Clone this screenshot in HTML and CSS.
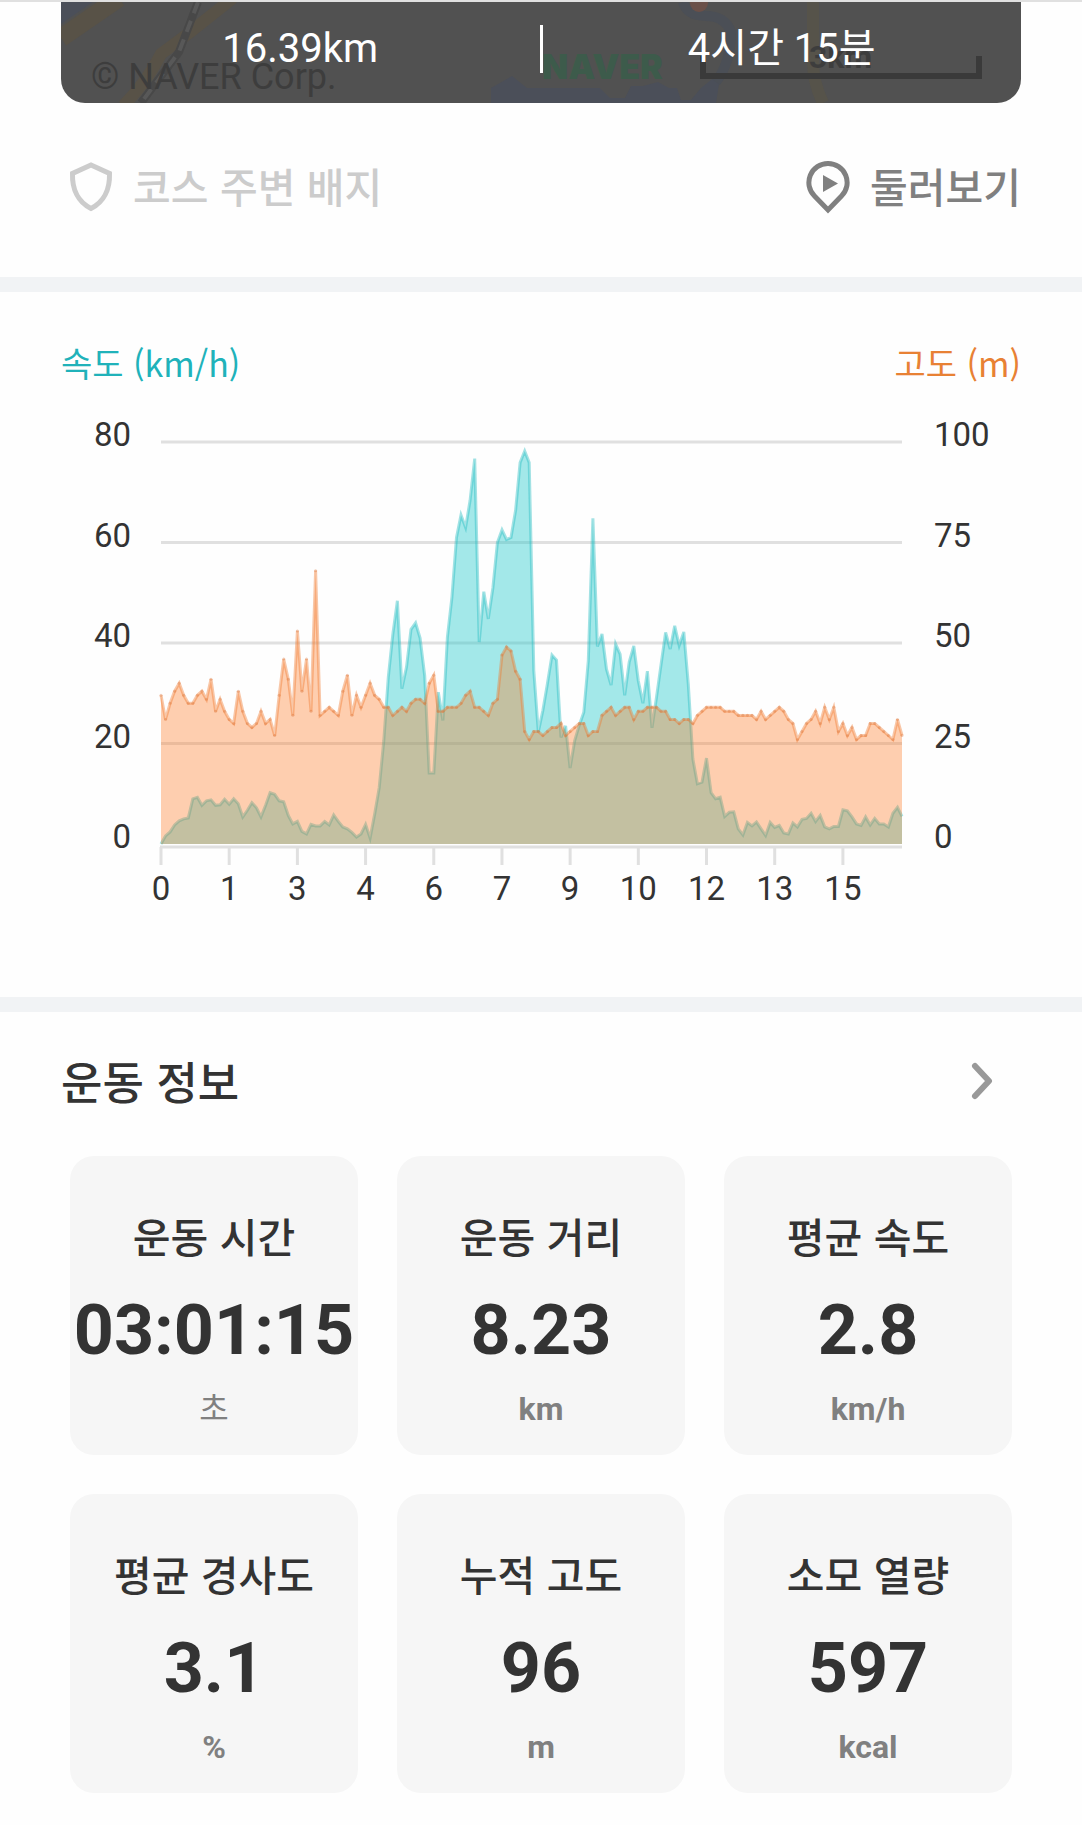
FILE: index.html
```html
<!DOCTYPE html>
<html lang="ko">
<head>
    <meta charset="UTF-8">
    <meta name="viewport" content="width=device-width, initial-scale=1.0">
    <title>운동 정보</title>
    <link rel="stylesheet" href="styles.css">
</head>
<body>
    <header class="course">
        <div class="course-summary">
            <svg class="map" viewBox="0 0 960 101" preserveAspectRatio="xMidYMax slice" aria-hidden="true">
                <g fill="#4b4f59">
                    <path d="M0 0H32L0 22Z"/>
                    <path d="M430 101V86L451 74L466 86H539L549 96H564L570 84H582L597 80L608 86H616L620 98H630L640 86L660 70L655 101Z"/>
                </g>
                <path d="M622 0Q626 14 645 14T670 30Q670 60 655 80" fill="none" stroke="#4b4f56" stroke-width="10"/>
                <circle cx="638" cy="1" r="9" fill="#6b5048"/>
                <g fill="none" stroke="#585247" stroke-width="12">
                    <path d="M0 36L58 -4" stroke-width="18"/>
                    <path d="M172 -4L128 31L100 52Q86 80 62 104"/>
                    <path d="M752 0V60Q752 80 762 101" stroke="#56534a"/>
                </g>
                <path d="M137 0L118 50L80 101" fill="none" stroke="#484848" stroke-width="8"/>
                <path d="M137 0L118 50L80 101" fill="none" stroke="#585858" stroke-width="4" stroke-dasharray="12 8"/>
                <path d="M642 54V74H918V54" fill="none" stroke="#3a3a3a" stroke-width="6"/>
                <text class="map-scale" x="748" y="66">3km</text>
                <text class="map-copyright" x="30" y="87">© NAVER Corp.</text>
                <text class="map-logo" x="481" y="77">NAVER</text>
            </svg>
            <div class="summary-item">16.39km</div>
            <div class="summary-item">4시간 15분</div>
        </div>
        <div class="course-actions">
            <button class="action" disabled>
                <svg width="44" height="52" viewBox="0 0 44 52" aria-hidden="true">
                    <path d="M22 4L40.500 12.500C41 28 35 41 22 47.500C9 41 3 28 3.500 12.500Z" fill="none" stroke="currentColor" stroke-width="5"/>
                </svg>
                코스 주변 배지
            </button>
            <button class="action">
                <svg width="44" height="54" viewBox="0 0 44 54" aria-hidden="true">
                    <path d="M22 3.500A19 19 0 0 0 8.500 36L22 50L35.500 36A19 19 0 0 0 22 3.500Z" fill="none" stroke="currentColor" stroke-width="5"/>
                    <path d="M17 15L32 23.500L17 32Z" fill="currentColor"/>
                </svg>
                둘러보기
            </button>
        </div>
    </header>

    <section class="chart">
        <div class="chart-legend">
            <span class="legend-speed">속도 (km/h)</span>
            <span class="legend-altitude">고도 (m)</span>
        </div>
        <svg class="chart-plot" id="chartPlot" viewBox="0 0 960 528"></svg>
    </section>

    <section class="workout">
        <div class="workout-header">
            <h2>운동 정보</h2>
            <button class="more" aria-label="더보기">
                <svg width="24" height="40" viewBox="0 0 24 40" aria-hidden="true">
                    <path d="M5 5L19 20L5 35" fill="none" stroke="currentColor" stroke-width="6" stroke-linecap="round" stroke-linejoin="round"/>
                </svg>
            </button>
        </div>
        <div class="cards">
            <div class="card">
                <div class="card-label">운동 시간</div>
                <div class="card-value">03:01:15</div>
                <div class="card-unit card-unit-ko">초</div>
            </div>
            <div class="card">
                <div class="card-label">운동 거리</div>
                <div class="card-value">8.23</div>
                <div class="card-unit">km</div>
            </div>
            <div class="card">
                <div class="card-label">평균 속도</div>
                <div class="card-value">2.8</div>
                <div class="card-unit">km/h</div>
            </div>
            <div class="card">
                <div class="card-label">평균 경사도</div>
                <div class="card-value">3.1</div>
                <div class="card-unit">%</div>
            </div>
            <div class="card">
                <div class="card-label">누적 고도</div>
                <div class="card-value">96</div>
                <div class="card-unit">m</div>
            </div>
            <div class="card">
                <div class="card-label">소모 열량</div>
                <div class="card-value">597</div>
                <div class="card-unit">kcal</div>
            </div>
        </div>
    </section>

    <script src="chart.js"></script>
</body>
</html>
```
FILE: chart.js
```js
// km/h
const speed = [
    0, 1.6, 2.4, 3.8, 4.6, 5, 5.2, 9, 9.3, 7.7, 8.6, 8.8, 7.7, 7.8, 8.9,
    7.9, 9, 8, 5.4, 6.7, 8.2, 7.2, 5.4, 7.7, 10.2, 9.9, 8.6, 8.4, 5.7, 4,
    4.5, 2.5, 2, 3.9, 3.6, 3.6, 4.5, 3.8, 5.8, 4.5, 3.4, 3, 2.3, 1.4, 2,
    3.9, 1.2, 6, 11.2, 20.6, 33.2, 41.7, 48.4, 30.9, 35.2, 42.7, 44, 41, 33.5, 14.1,
    14.1, 30.2, 24.6, 41.2, 49.1, 61, 65.5, 63, 68.4, 76.7, 40.2, 50.2, 44.8, 51, 60,
    62.5, 60.6, 61, 66.4, 75.9, 78.2, 75.9, 34.5, 22.3, 26.6, 31.9, 37.6, 36.6, 21.2, 23.5,
    15.1, 20.6, 23.6, 26.2, 36.5, 64.8, 39.3, 41.8, 34.8, 31.6, 39.8, 37.8, 29.6, 36.2, 39.4,
    32.5, 28, 34.4, 23.1, 29.2, 35.8, 42.1, 38.8, 43.4, 39.5, 42.2, 31.8, 16.9, 12, 12.3,
    17.1, 10.2, 9, 9.3, 5.5, 6.3, 6.4, 3, 1.8, 4.3, 3.6, 4.4, 3, 1.7, 4.3,
    3.3, 3.7, 2.2, 2, 4.2, 3.4, 4.9, 5.1, 6.1, 4.5, 5.7, 3.4, 3, 3.5, 3.5,
    6.8, 6.6, 5.4, 4, 3.7, 5.4, 3.8, 5.1, 4, 4, 3.4, 6.1, 7.3, 5.5
];

// m
const altitude = [
    37, 31, 35, 38, 40, 37, 35, 35, 37, 38, 36, 41, 33, 36, 33,
    31, 30, 38, 33, 30, 29, 30, 33, 30, 31, 27, 37, 46, 41, 32,
    53, 38, 46, 33, 68, 32, 33, 34, 33, 32, 38, 42, 32, 37, 34,
    37, 40, 37, 36, 34, 34, 32, 33, 34, 33, 35, 36, 36, 35, 40,
    42, 33, 33, 34, 34, 34, 35, 37, 38, 34, 34, 33, 32, 35, 36,
    47, 49, 48, 43, 41, 28, 26, 28, 28, 27, 28, 29, 29, 30, 27,
    28, 29, 30, 30, 27, 28, 28, 32, 33, 34, 32, 33, 34, 34, 31,
    33, 33, 34, 34, 34, 33, 33, 31, 31, 30, 31, 31, 30, 32, 33,
    34, 34, 34, 34, 33, 33, 33, 32, 32, 32, 32, 31, 33, 31, 32,
    33, 34, 33, 31, 30, 26, 28, 30, 31, 33, 30, 34, 31, 34, 28,
    30, 27, 29, 26, 27, 27, 30, 30, 29, 28, 27, 26, 31, 27
];

const plot = { left: 100, top: 54, width: 741, height: 402 };
const bottom = plot.top + plot.height;
const right = plot.left + plot.width;
const distanceLabels = [0, 1, 3, 4, 6, 7, 9, 10, 12, 13, 15];
const pointsPerTick = 15;

function xAt(i) {
    return plot.left + i * plot.width / (speed.length - 1);
}

function linePoints(values, max) {
    return values.map((v, i) => xAt(i).toFixed(1) + ',' + (bottom - v / max * plot.height).toFixed(1));
}

function series(name, values, max) {
    const points = linePoints(values, max);
    const area = `${plot.left},${bottom} ${points.join(' ')} ${right},${bottom}`;
    return `<polygon class="${name}-area" points="${area}"/>` +
        `<polyline class="${name}-line" points="${points.join(' ')}"/>`;
}

function drawChart() {
    let svg = '';

    // grid and both value axes
    for (let i = 0; i <= 4; i++) {
        const y = plot.top + plot.height * i / 4;
        if (i < 4) {
            svg += `<line class="grid" x1="${plot.left}" x2="${right}" y1="${y}" y2="${y}"/>`;
        }
        svg += `<text class="axis-value axis-left" x="70" y="${y + 4}">${80 - i * 20}</text>`;
        svg += `<text class="axis-value" x="873" y="${y + 4}">${100 - i * 25}</text>`;
    }

    // distance axis
    svg += `<line class="grid" x1="${plot.left - 1}" x2="${right}" y1="${bottom + 3}" y2="${bottom + 3}"/>`;
    distanceLabels.forEach((label, i) => {
        const x = xAt(i * pointsPerTick);
        svg += `<line class="grid" x1="${x}" x2="${x}" y1="${bottom + 3}" y2="${bottom + 21}"/>`;
        svg += `<text class="axis-distance" x="${x}" y="${bottom + 56}">${label}</text>`;
    });

    svg += series('speed', speed, 80);
    svg += series('altitude', altitude, 100);
    altitude.forEach((v, i) => {
        svg += `<circle class="altitude-dot" cx="${xAt(i)}" cy="${bottom - v / 100 * plot.height}" r="1.500"/>`;
    });

    document.getElementById('chartPlot').innerHTML = svg;
}

drawChart();
```
FILE: styles.css
```css
* {
    margin: 0;
    padding: 0;
    box-sizing: border-box;
}

body {
    font-family: Roboto, 'Noto Sans CJK KR', sans-serif;
    background: #fefefe;
    color: #333;
}

button {
    border: none;
    background: none;
    font: inherit;
    color: inherit;
    cursor: pointer;
}

.course {
    border-top: 2px solid #e0e0e0;
    padding: 0 61px 62px;
}

.course-summary {
    position: relative;
    display: flex;
    align-items: center;
    overflow: hidden;
    background: #515151;
    border-radius: 0 0 24px 24px;
    padding: 23px 0 30px;
}

.map {
    position: absolute;
    inset: 0;
    width: 100%;
    height: 100%;
}

.map-copyright {
    font-size: 36px;
    fill: #3d3d3d;
}

.map-scale {
    font-size: 32px;
    font-weight: 700;
    fill: #3d3d3d;
}

.map-logo {
    font-family: Inter, sans-serif;
    font-size: 34px;
    font-weight: 900;
    fill: #3d5b4b;
}

.summary-item {
    position: relative;
    flex: 1;
    font-size: 40px;
    line-height: 48px;
    text-align: center;
    color: #fff;
}

.summary-item + .summary-item {
    border-left: 3px solid #fff;
}

.course-actions {
    display: flex;
    justify-content: space-between;
    padding: 52px 0 0 8px;
}

.action {
    display: flex;
    align-items: center;
    gap: 20px;
    font-family: 'Noto Sans CJK KR', sans-serif;
    font-size: 41px;
    font-weight: 500;
    line-height: 60px;
    color: #808080;
}

.action svg {
    margin-top: 4px;
}

.action:disabled {
    color: #ccc;
    cursor: default;
}

.chart {
    border-top: 15px solid #f1f3f5;
    padding: 47px 61px 81px;
}

.chart-legend {
    display: flex;
    justify-content: space-between;
    padding-bottom: 1px;
    font-family: 'Noto Sans CJK KR', sans-serif;
    font-size: 34px;
    line-height: 48px;
}

.legend-speed {
    color: #20b2ba;
}

.legend-altitude {
    color: #e88134;
}

.chart-plot {
    display: block;
    width: 100%;
}

.grid {
    stroke: #e0e0e0;
    stroke-width: 3;
}

.axis-value {
    font-size: 33px;
    fill: #333;
}

.axis-left {
    text-anchor: end;
}

.axis-distance {
    font-size: 33px;
    text-anchor: middle;
    fill: #333;
}

.speed-area {
    fill: rgba(28, 200, 202, 0.4);
}

.speed-line {
    fill: none;
    stroke: rgba(28, 184, 190, 0.4);
    stroke-width: 3;
}

.altitude-area {
    fill: rgba(255, 118, 29, 0.35);
}

.altitude-line {
    fill: none;
    stroke: rgba(240, 118, 40, 0.4);
    stroke-width: 3;
}

.altitude-dot {
    fill: rgba(214, 110, 50, 0.35);
}

.workout {
    border-top: 15px solid #f1f3f5;
    padding: 37px 70px 32px;
}

.workout-header {
    display: flex;
    justify-content: space-between;
    align-items: center;
    padding: 0 18px 43px 0;
}

.workout-header h2 {
    margin-left: -9px;
    font-family: 'Noto Sans CJK KR', sans-serif;
    font-size: 45px;
    font-weight: 500;
    line-height: 64px;
}

.more {
    display: flex;
    color: #999;
}

.cards {
    display: grid;
    grid-template-columns: repeat(3, minmax(0, 1fr));
    gap: 39px;
}

.card {
    background: #f6f6f6;
    border-radius: 24px;
    padding: 47px 0 22px;
    text-align: center;
}

.card-label {
    font-family: 'Noto Sans CJK KR', sans-serif;
    font-size: 41px;
    font-weight: 500;
    line-height: 64px;
}

.card-value {
    margin: 15px 0 7px;
    font-size: 70px;
    font-weight: 700;
    line-height: 96px;
}

.card-unit {
    font-size: 32px;
    font-weight: 700;
    line-height: 48px;
    color: #808080;
}

.card-unit-ko {
    font-weight: 400;
}
```
